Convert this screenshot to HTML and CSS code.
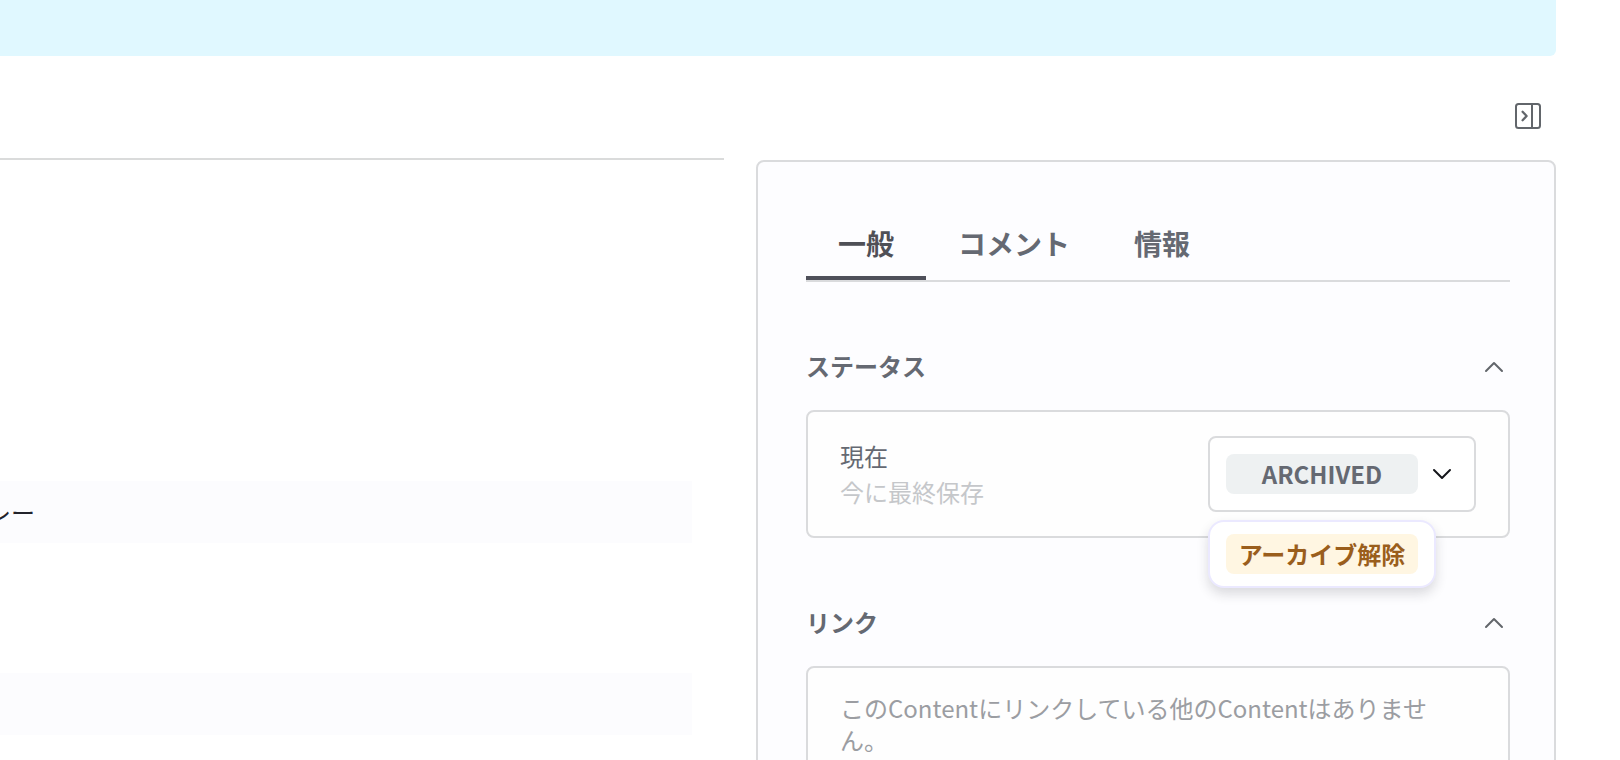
FILE: index.html
```html
<!DOCTYPE html>
<html lang="ja">
<head>
<meta charset="utf-8">
<title>Content</title>
<link rel="stylesheet" href="styles.css">
</head>
<body>
<div class="page">
  <div class="banner"></div>
  <header class="toolbar">
    <button class="icon-button" type="button" aria-label="サイドバーを閉じる">
      <svg width="28" height="28" viewBox="0 0 28 28" fill="none" stroke="currentColor" stroke-width="2" stroke-linecap="round" stroke-linejoin="round">
        <rect x="2" y="2" width="24" height="24" rx="2.5"/>
        <path d="M18 2v24"/>
        <path d="M8.6 9.8L12.6 14l-4 4.2" stroke-width="2.3"/>
      </svg>
    </button>
  </header>
  <div class="columns">
    <main class="editor">
      <input class="field" type="text" value="レー" aria-label="タイトル">
      <input class="field" type="text" aria-label="説明">
    </main>
    <aside class="panel">
      <div class="tabs" role="tablist">
        <button class="tab tab-active" type="button" role="tab" aria-selected="true">一般</button>
        <button class="tab" type="button" role="tab" aria-selected="false">コメント</button>
        <button class="tab" type="button" role="tab" aria-selected="false">情報</button>
      </div>
      <section class="section">
        <div class="section-head">
          <h2 class="section-title">ステータス</h2>
          <button class="collapse" type="button" aria-label="ステータスを閉じる">
            <svg width="20" height="12" viewBox="0 0 20 12" fill="none" stroke="currentColor" stroke-width="2" stroke-linecap="round" stroke-linejoin="round"><path d="M2 10l8-8 8 8"/></svg>
          </button>
        </div>
        <div class="card status-card">
          <div class="status-text">
            <label class="status-label" for="status">現在</label>
            <span class="status-saved">今に最終保存</span>
          </div>
          <div class="dropdown">
            <select class="badge status-select" id="status">
              <option>ARCHIVED</option>
            </select>
            <svg class="dropdown-arrow" width="20" height="12" viewBox="0 0 20 12" fill="none" stroke="currentColor" stroke-width="2" stroke-linecap="round" stroke-linejoin="round"><path d="M2 2l8 8 8-8"/></svg>
            <div class="menu">
              <button class="badge menu-item" type="button">アーカイブ解除</button>
            </div>
          </div>
        </div>
      </section>
      <section class="section">
        <div class="section-head">
          <h2 class="section-title">リンク</h2>
          <button class="collapse" type="button" aria-label="リンクを閉じる">
            <svg width="20" height="12" viewBox="0 0 20 12" fill="none" stroke="currentColor" stroke-width="2" stroke-linecap="round" stroke-linejoin="round"><path d="M2 10l8-8 8 8"/></svg>
          </button>
        </div>
        <div class="card">
          <p class="links-empty">このContentにリンクしている他のContentはありません。</p>
        </div>
      </section>
    </aside>
  </div>
</div>
</body>
</html>
```
FILE: styles.css
```css
* {
  box-sizing: border-box;
}

body {
  margin: 0;
  background: #fff;
  color: #656972;
  font-family: "Noto Sans CJK JP", sans-serif;
  font-size: 24px;
  line-height: 36px;
}

button,
input,
select {
  margin: 0;
  padding: 0;
  border: 0;
  background: none;
  color: inherit;
  font: inherit;
}

svg {
  display: block;
}

.page {
  display: flex;
  flex-direction: column;
  height: 100vh;
  padding-right: 64px;
  overflow: hidden;
}

.banner {
  flex: none;
  height: 56px;
  border-bottom-right-radius: 6px;
  background: #e0f8ff;
}

.toolbar {
  display: flex;
  flex: none;
  justify-content: flex-end;
  padding: 46px 14px 28px;
}

.icon-button {
  color: #62666b;
}

.columns {
  display: grid;
  flex: 1;
  grid-template-columns: minmax(0, 1fr) 800px;
  gap: 32px;
  min-height: 0;
}

.editor {
  display: flex;
  flex-direction: column;
  gap: 130px;
  padding: 321px 32px 0 0;
  border-top: 2px solid #dadbdb;
}

.field {
  width: 100%;
  height: 62px;
  flex: none;
  padding-bottom: 2px;
  background: #fcfcfe;
  color: #22232b;
  text-indent: -13px;
}

.panel {
  min-height: 1200px;
  margin-top: 2px;
  padding: 56px 44px 48px 48px;
  border: 2px solid #dadbdd;
  border-radius: 8px;
  background: #fdfdff;
}

.tabs {
  display: flex;
  border-bottom: 2px solid #dadbdd;
}

.tab {
  padding: 5px 32px 13px;
  border-bottom: 4px solid transparent;
  font-size: 28px;
  font-weight: 700;
  line-height: 40px;
}

.tab-active {
  border-bottom-color: #4f505a;
  color: #4f5057;
}

.section-head {
  display: flex;
  align-items: center;
  justify-content: space-between;
  padding: 66px 6px 24px 0;
}

.section-title {
  margin: 0;
  padding-bottom: 2px;
  font-size: 24px;
  font-weight: 700;
  line-height: 36px;
}

.collapse {
  color: #62666b;
}

.card {
  padding: 24px 32px;
  border: 2px solid #dadbdd;
  border-radius: 8px;
  background: #fefefe;
}

.status-card {
  display: flex;
  align-items: center;
  justify-content: space-between;
}

.status-text {
  display: flex;
  flex-direction: column;
}

.status-saved {
  color: #c5c7ca;
}

.dropdown {
  position: relative;
  display: flex;
  align-items: center;
  gap: 14px;
  padding: 16px 22px 16px 16px;
  border: 2px solid #dadbdd;
  border-radius: 8px;
  background: #fff;
}

.dropdown-arrow {
  color: #14151a;
}

.badge {
  width: 192px;
  height: 40px;
  border-radius: 8px;
  font-weight: 700;
  line-height: 40px;
  text-align: center;
}

.status-select {
  appearance: none;
  background: #eef1f2;
  color: #656972;
  text-align-last: center;
}

.menu {
  position: absolute;
  top: calc(100% + 10px);
  left: -2px;
  padding: 12px 16px;
  border: 2px solid #ebe9ff;
  border-radius: 16px;
  background: #fff;
  box-shadow: 0 6px 12px rgb(40 40 50 / 16%);
}

.menu-item {
  display: block;
  background: #fff6e2;
  color: #9a5e1c;
}

.links-empty {
  margin: 0;
  padding-right: 24px;
  color: #9b9da2;
  line-height: 32px;
}
```
